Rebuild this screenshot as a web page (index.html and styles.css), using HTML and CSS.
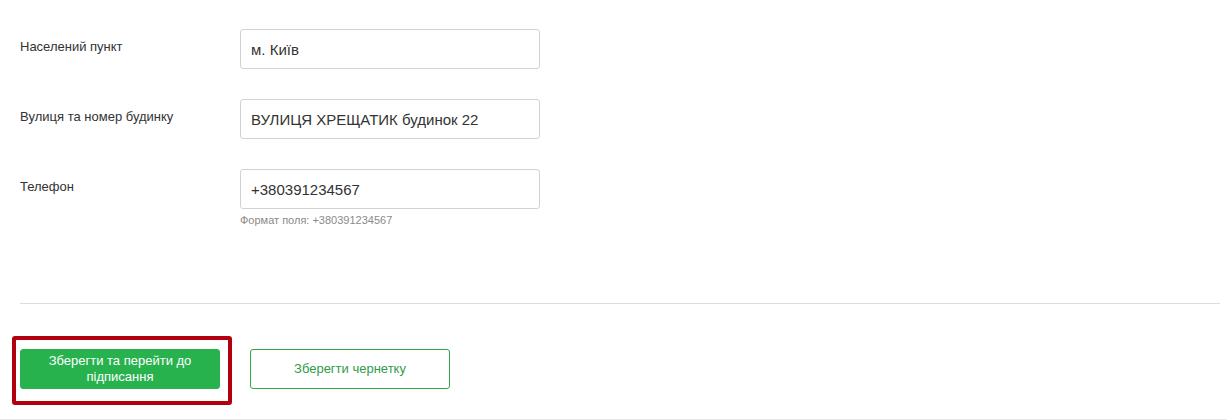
FILE: index.html
```html
<!DOCTYPE html>
<html lang="uk">
<head>
<meta charset="utf-8">
<link rel="stylesheet" href="styles.css">
</head>
<body>
<div class="page">
  <form class="form">
    <div class="row">
      <label class="label">Населений пункт</label>
      <div class="field">
        <input class="input" type="text" value="м. Київ">
      </div>
    </div>
    <div class="row">
      <label class="label">Вулиця та номер будинку</label>
      <div class="field">
        <input class="input" type="text" value="ВУЛИЦЯ ХРЕЩАТИК будинок 22">
      </div>
    </div>
    <div class="row">
      <label class="label">Телефон</label>
      <div class="field">
        <input class="input" type="text" value="+380391234567">
        <div class="hint">Формат поля: +380391234567</div>
      </div>
    </div>
  </form>
  <hr class="divider">
  <div class="actions">
    <div class="highlight-wrap">
      <button class="btn btn-primary" type="button">Зберегти та перейти до підписання</button>
      <span class="highlight"></span>
    </div>
    <button class="btn btn-outline" type="button">Зберегти чернетку</button>
  </div>
</div>
</body>
</html>
```

FILE: styles.css
```css
* { box-sizing: border-box; }
html, body { margin: 0; padding: 0; background: #fff; }
body {
  font-family: "Liberation Sans", Arial, sans-serif;
  color: #333;
  width: 1227px;
  height: 420px;
  overflow: hidden;
}
.page {
  height: 420px;
  border-bottom: 1px solid #e6e6e6;
  padding: 29px 7px 0 20px;
}
.form {
  display: flex;
  flex-direction: column;
  gap: 30px;
}
.row {
  display: flex;
  align-items: flex-start;
}
.label {
  width: 220px;
  font-size: 13px;
  line-height: 16px;
  padding-top: 10px;
  color: #333;
}
.field {
  width: 300px;
  display: flex;
  flex-direction: column;
}
.input {
  width: 300px;
  height: 40px;
  border: 1px solid #d2d2d2;
  border-radius: 3px;
  padding: 0 10px;
  font-family: "Liberation Sans", Arial, sans-serif;
  font-size: 15px;
  color: #333;
  background: #fff;
  outline: none;
}
.hint {
  margin-top: 4px;
  font-size: 11px;
  line-height: 14px;
  color: #8a8a8a;
}
.divider {
  margin: 76px 0 0 0;
  border: 0;
  border-top: 1px solid #dcdcdc;
  height: 0;
}
.actions {
  display: flex;
  gap: 30px;
  margin-top: 45px;
}
.highlight-wrap {
  position: relative;
}
.highlight {
  position: absolute;
  left: -8px;
  top: -13px;
  right: -12px;
  bottom: -16px;
  border: 4px solid #b3000f;
  border-radius: 3px;
  pointer-events: none;
}
.btn {
  width: 200px;
  height: 40px;
  border-radius: 3px;
  font-family: "Liberation Sans", Arial, sans-serif;
  font-size: 13px;
  line-height: 16px;
  padding: 0 20px;
  cursor: pointer;
}
.btn-primary {
  background: #27b24e;
  border: 1px solid #27b24e;
  color: #fff;
}
.btn-outline {
  background: #fff;
  border: 1px solid #2fa84d;
  color: #2e9c48;
}
```
